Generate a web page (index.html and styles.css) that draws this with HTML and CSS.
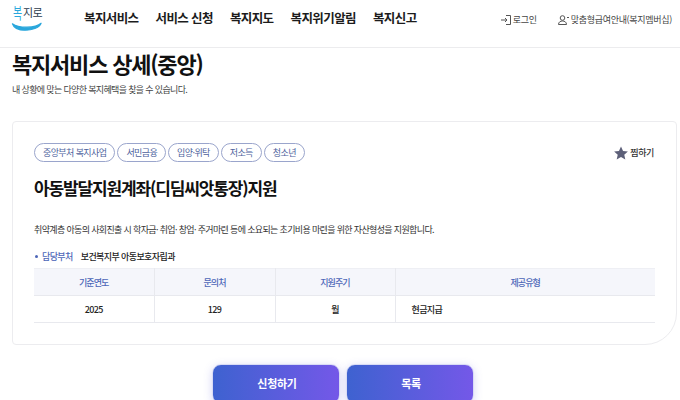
FILE: index.html
```html
<!DOCTYPE html>
<html lang="ko">
<head>
<meta charset="utf-8">
<title>복지서비스 상세</title>
<link rel="stylesheet" href="styles.css">
</head>
<body>
<header class="header">
  <a class="logo">
    <span class="logo-text"><span class="logo-bok">복</span><span class="logo-ji">지로</span></span>
    <svg class="logo-smile" width="32" height="10" viewBox="0 0 34 10"><path d="M1.5 1.500C8 6.500 26 6.500 32 1C30 6 22 8.500 15 8.500C8 8.500 3 6 1.500 1.500Z" fill="#2aa7dc" stroke="#2aa7dc" stroke-width="1.200" stroke-linejoin="round"/></svg>
  </a>
  <nav class="nav">
    <a>복지서비스</a><a>서비스 신청</a><a>복지지도</a><a>복지위기알림</a><a>복지신고</a>
  </nav>
  <div class="util">
    <a class="util-link">
      <svg width="10" height="10" viewBox="0 0 10 10" fill="none" stroke="#555" stroke-width="1"><path d="M0 5H6M4 3l2 2-2 2M5 .5H9.500V9.500H5"/></svg>로그인
    </a>
    <a class="util-link">
      <svg width="11" height="10" viewBox="0 0 11 10" fill="none" stroke="#555" stroke-width="1"><circle cx="4.500" cy="3" r="2.300"/><path d="M.5 9.500C.5 7 2.500 6 4.500 6S8.500 7 8.500 9.500ZM9 2.500h2"/></svg>맞춤형급여안내(복지멤버십)
    </a>
  </div>
</header>
<main class="main">
  <h1 class="page-title">복지서비스 상세(중앙)</h1>
  <p class="page-sub">내 상황에 맞는 다양한 복지혜택을 찾을 수 있습니다.</p>
  <section class="card">
    <div class="card-top">
      <ul class="tags">
        <li class="tag">중앙부처 복지사업</li>
        <li class="tag">서민금융</li>
        <li class="tag">입양·위탁</li>
        <li class="tag">저소득</li>
        <li class="tag">청소년</li>
      </ul>
      <a class="fav">
        <svg width="14" height="14" viewBox="0 0 24 24"><path d="M12 .8l3.500 7.700 8.300.9-6.200 5.600 1.800 8.200L12 19l-7.400 4.200 1.800-8.200L.2 9.400l8.300-.9z" fill="#5d6079"/></svg>찜하기
      </a>
    </div>
    <h2 class="svc-title">아동발달지원계좌(디딤씨앗통장)지원</h2>
    <p class="svc-desc">취약계층 아동의 사회진출 시 학자금· 취업· 창업· 주거마련 등에 소요되는 초기비용 마련을 위한 자산형성을 지원합니다.</p>
    <div class="dept"><span class="dept-label">담당부처</span><span class="dept-name">보건복지부 아동보호자립과</span></div>
    <table class="info">
      <thead>
        <tr><th class="c1">기준연도</th><th class="c2">문의처</th><th class="c3">지원주기</th><th>제공유형</th></tr>
      </thead>
      <tbody>
        <tr><td>2025</td><td>129</td><td>월</td><td class="left">현금지급</td></tr>
      </tbody>
    </table>
  </section>
  <div class="actions">
    <a class="btn">신청하기</a>
    <a class="btn">목록</a>
  </div>
</main>
</body>
</html>
```
FILE: styles.css
```css
* { box-sizing: border-box; }
html, body { margin: 0; padding: 0; height: 400px; overflow: hidden; }
body { background: #fff; color: #111; font-family: "Noto Sans CJK KR", "Noto Sans", sans-serif; }
ul { list-style: none; margin: 0; padding: 0; }
.header { display: flex; align-items: flex-start; height: 48px; padding: 0 8px 0 11px; border-bottom: 1px solid #ececee; }
.logo { width: 73px; height: 32px; margin-top: 3px; display: flex; flex-direction: column; }
.logo-text { display: flex; align-items: center; height: 18px; font-size: 11px; line-height: 18px; letter-spacing: -.5px; padding-left: 2px; white-space: nowrap; }
.logo-bok { display: inline-block; width: 10px; color: #2aa7dc; font-size: 16px; transform: scaleX(.62); transform-origin: left center; }
.logo-ji { color: #2b3c4e; }
.logo-smile { margin-top: 1px; }
.nav { display: flex; gap: 17px; font-size: 12.500px; font-weight: 700; line-height: 18px; margin-top: 9px; color: #1c1c1c; letter-spacing: -.6px; }
.util { display: flex; gap: 21px; margin-left: auto; margin-top: 13px; font-size: 9px; line-height: 14px; color: #444; letter-spacing: -.3px; }
.util-link { display: flex; align-items: center; gap: 2px; }
.main { padding: 0 3px 0 12px; }
.page-title { margin: 0; font-size: 22px; line-height: 30px; font-weight: 700; letter-spacing: -1.200px; }
.page-sub { margin: 5px 0 0; font-size: 9px; line-height: 14px; color: #444; letter-spacing: -.65px; }
.card { height: 224px; margin-top: 24px; padding: 21px 22px 0 21px; border: 1px solid #ececef; border-radius: 4px 4px 32px 4px; }
.card-top { display: flex; align-items: center; justify-content: space-between; }
.tags { display: flex; gap: 2px; }
.tag { height: 19px; padding: 0 8px; border: 1px solid #9aa5cc; border-radius: 10px; font-size: 9px; line-height: 17px; color: #4d5f9c; letter-spacing: -.6px; }
.fav { display: flex; align-items: center; gap: 2px; font-size: 9px; font-weight: 500; color: #333; letter-spacing: -.4px; }
.svc-title { margin: 13px 0 0; font-size: 17px; line-height: 26px; font-weight: 700; letter-spacing: -1.150px; }
.svc-desc { margin: 21px 0 0; font-size: 9px; line-height: 16px; color: #333; letter-spacing: -.65px; }
.dept { display: flex; align-items: center; margin-top: 12px; font-size: 9px; line-height: 14px; font-weight: 500; letter-spacing: -.6px; }
.dept-label { color: #4d66b8; margin-right: 8px; position: relative; padding-left: 8px; }
.dept-label::before { content: ""; position: absolute; left: 1px; top: 5px; width: 3px; height: 3px; border-radius: 50%; background: #4d66b8; }
.dept-name { color: #222; }
.info { width: 621px; margin-top: 4px; border-collapse: collapse; table-layout: fixed; font-size: 9px; letter-spacing: -.6px; }
.info th, .info td { height: 27px; padding: 0; text-align: center; font-weight: 500; border-bottom: 1px solid #e8e9ee; border-right: 1px solid #e8e9ee; }
.info th:last-child, .info td:last-child { border-right: 0; }
.info th { background: #f5f6fb; color: #4d66b8; border-top: 1px solid #eeeff4; letter-spacing: -.9px; }
.info td { color: #222; }
.info td.left { text-align: left; padding-left: 16px; }
.c1 { width: 120px; }
.c2 { width: 121px; }
.c3 { width: 120px; }
.actions { display: flex; justify-content: center; gap: 6px; margin-top: 19px; padding-right: 3px; }
.btn { width: 128px; height: 40px; padding-left: 2px; border-radius: 9px; background: linear-gradient(90deg, #3e62d0, #7458e8); border: 1px solid #d9dcf5; box-shadow: 0 2px 8px rgba(90, 90, 220, .25); color: #fff; font-size: 11px; font-weight: 700; line-height: 36px; text-align: center; letter-spacing: -.3px; }
```
